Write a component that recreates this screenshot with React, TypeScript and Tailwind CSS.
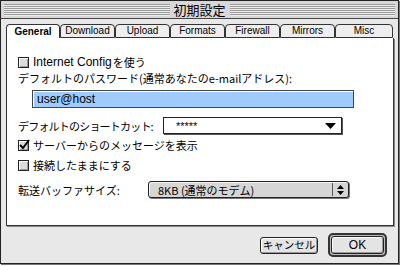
import React from "react";

const jp = { fontFamily: '"Noto Sans CJK JP", "Noto Sans", sans-serif' };
const lat = { fontFamily: '"Liberation Sans", "Noto Sans CJK JP", sans-serif' };

function Checkbox({ checked }: { checked?: boolean }) {
  return (
    <div className="relative w-[11px] h-[11px] border border-[#222] bg-[#dcdcdc] shadow-[inset_1px_1px_0_#fff,inset_-1px_-1px_0_#999] shrink-0">
      {checked && (
        <svg className="absolute left-[-1px] top-[-3px]" width="13" height="13" viewBox="0 0 13 13">
          <path d="M2 7 L5 10 L11 2" stroke="#000" strokeWidth="2" fill="none" />
        </svg>
      )}
    </div>
  );
}

export default function App() {
  const tabs = ["General", "Download", "Upload", "Formats", "Firewall", "Mirrors", "Misc"];
  const widths = [54, 55, 55, 55, 55, 55, 58];
  return (
    <div className="w-[400px] h-[266px] bg-white overflow-hidden">
      <div className="w-[399px] h-[264px] border border-[#222] bg-[#e8e8e8] flex flex-col shadow-[1px_1px_0_#777]">
        {/* title bar */}
        <div className="h-[18px] border-b border-[#444] bg-[#d8d8d8] flex items-center px-[3px]">
          <div className="flex-1 h-[12px] bg-[repeating-linear-gradient(to_bottom,#9a9a9a_0px,#9a9a9a_1px,#eeeeee_1px,#eeeeee_2px)]" />
          <div className="px-[4px] text-[13px] leading-[14px] text-black bg-[#d8d8d8]" style={jp}>初期設定</div>
          <div className="flex-1 h-[12px] bg-[repeating-linear-gradient(to_bottom,#9a9a9a_0px,#9a9a9a_1px,#eeeeee_1px,#eeeeee_2px)]" />
        </div>
        {/* body */}
        <div className="flex flex-col pl-[5px] pt-[5px]">
          <div className="flex h-[14px]">
            {tabs.map((t, i) => (
              <div
                key={t}
                style={{ width: widths[i], ...lat }}
                className={
                  "h-[14px] rounded-t-[4px] border-t border-l border-r border-[#333] flex items-center justify-center text-[10px] leading-[10px] text-black " +
                  (i === 0 ? "bg-white font-bold" : "bg-[#eeeeee] border-b")
                }
              >
                {t}
              </div>
            ))}
          </div>
          <div className="w-[388px] h-[188px] bg-white border-l border-r border-b border-[#333] shadow-[1px_1px_0_#888] relative flex flex-col pl-[11px] pt-[17px] text-[11px] leading-[14px] text-black whitespace-nowrap" style={jp}>
            <div className="flex items-center gap-[4px] h-[14px]">
              <Checkbox />
              <span style={lat} className="text-[12px]">Internet Config</span>
              <span className="-ml-[3px]">を使う</span>
            </div>
            <div className="mt-[2px] h-[14px]">デフォルトのパスワード(通常あなたのe-mailアドレス):</div>
            <div className="mt-[5px] ml-[14px] w-[322px] h-[18px] border border-[#444] bg-[#9fcbff] shadow-[inset_1px_1px_0_#fff] flex items-center pl-[4px] text-[12px]" style={lat}>
              user@host
            </div>
            <div className="mt-[9px] flex items-center h-[17px]">
              <span className="w-[145px] tracking-[-0.8px]">デフォルトのショートカット:</span>
              <div className="w-[179px] h-[17px] border border-[#222] bg-white shadow-[1px_1px_0_#555] flex items-center justify-between pl-[12px] pr-[5px]">
                <span style={lat} className="text-[11px]">*****</span>
                <svg width="11" height="6" viewBox="0 0 11 6"><path d="M0 0 H11 L5.5 6 Z" fill="#000" /></svg>
              </div>
            </div>
            <div className="mt-[4px] flex items-center gap-[4px] h-[14px]">
              <Checkbox checked />
              <span>サーバーからのメッセージを表示</span>
            </div>
            <div className="mt-[6px] flex items-center gap-[4px] h-[14px]">
              <Checkbox />
              <span>接続したままにする</span>
            </div>
            <div className="mt-[9px] flex items-center h-[17px]">
              <span className="w-[130px]">転送バッファサイズ:</span>
              <div className="w-[201px] h-[17px] border border-[#222] rounded-[3px] bg-[#d6d6d6] shadow-[inset_1px_1px_0_#f4f4f4,1px_1px_0_#777] flex items-center justify-between pl-[9px] pr-[1px]">
                <span>8KB (通常のモデム)</span>
                <div className="w-[15px] h-[13px] border-l border-[#555] flex items-center justify-center">
                  <svg width="7" height="10" viewBox="0 0 7 10"><path d="M0 4 L3.5 0 L7 4 Z M0 6 L3.5 10 L7 6 Z" fill="#000" /></svg>
                </div>
              </div>
            </div>
          </div>
          <div className="flex justify-end items-center gap-[10px] pr-[11px] mt-[7px]">
            <div className="w-[58px] h-[17px] border border-[#222] rounded-[3px] bg-[#e4e4e4] shadow-[inset_1px_1px_0_#fff,inset_-1px_-1px_0_#999] flex items-center justify-center text-[10.5px] whitespace-nowrap" style={jp}>
              キャンセル
            </div>
            <div className="w-[59px] h-[24px] border-[2px] border-[#333] rounded-[5px] bg-[#bbb] p-[1px]">
              <div className="w-full h-full border border-[#222] rounded-[3px] bg-[#e4e4e4] shadow-[inset_1px_1px_0_#fff,inset_-1px_-1px_0_#999] flex items-center justify-center text-[12px]" style={lat}>
                OK
              </div>
            </div>
          </div>
        </div>
      </div>
    </div>
  );
}
